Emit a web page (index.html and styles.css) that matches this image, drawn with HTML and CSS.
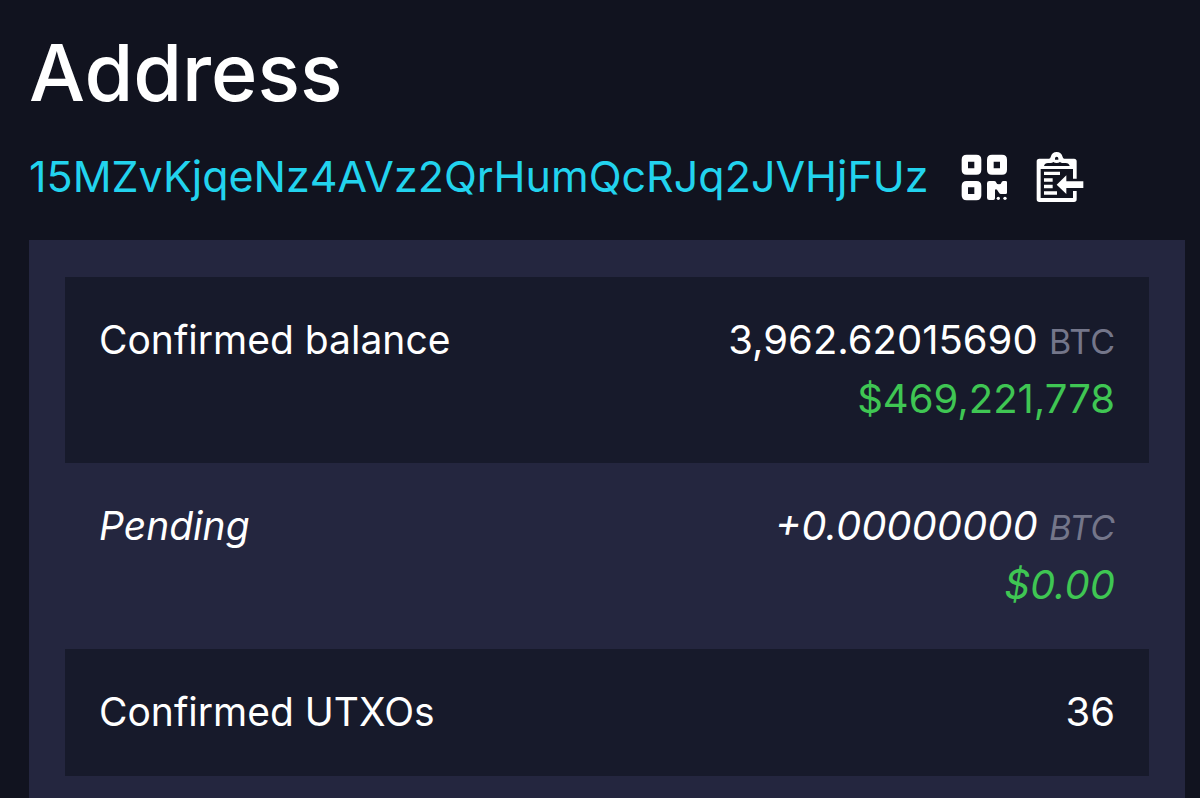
FILE: index.html
```html
<!DOCTYPE html>
<html lang="en">
  <head>
    <meta charset="UTF-8" />
    <meta name="viewport" content="width=device-width, initial-scale=1.0" />
    <title>Address</title>
    <link rel="stylesheet" href="styles.css">
  </head>
  <body>
    <main class="page">
      <h1 class="title">Address</h1>

      <div class="address-row">
        <a class="address-link" href="#15MZvKjqeNz4AVz2QrHumQcRJq2JVHjFUz">15MZvKjqeNz4AVz2QrHumQcRJq2JVHjFUz</a>
        <div class="actions">
          <button class="icon-button" type="button" aria-label="Show QR code">
            <svg viewBox="0 0 144 150" aria-hidden="true">
              <path fill-rule="evenodd" d="M17 8h29q15 0 15 15v30q0 15-15 15h-29q-15 0-15-15v-30q0-15 15-15zM21 29v20h19v-20z" />
              <path fill-rule="evenodd" d="M93 8h30q15 0 15 15v30q0 15-15 15h-30q-15 0-15-15v-30q0-15 15-15zM98 29v20h19v-20z" />
              <path fill-rule="evenodd" d="M17 87h29q15 0 15 15v28q0 15-15 15h-29q-15 0-15-15v-28q0-15 15-15zM21 106v20h19v-20z" />
              <path d="M85 87h15q5 0 6 5 1 5 8 5 6 0 7-5 1-5 6-5h7q4 0 4 4v31q0 4-4 4h-14q-4 0-6-4l-6-9q-3-3-6 0v26q0 5-5 5h-12q-7 0-7-7v-43q0-7 7-7z" />
              <circle cx="112" cy="139" r="5" />
              <circle cx="132" cy="139" r="5" />
            </svg>
          </button>
          <button class="icon-button" type="button" aria-label="Copy address">
            <svg viewBox="0 0 144 150" aria-hidden="true">
              <path fill-rule="evenodd" d="M10 20h29q4 0 5-5 4-15 18-15t18 15q1 5 5 5h29q8 0 8 8v52h-11v-29h-97v87h97v-21h11v25q0 8-8 8h-104q-8 0-8-8v-114q0-8 8-8zM62 14q-5 0-5 5v4h10v-4q0-5-5-5zM24 42h77q-2-9-12-9h-9q-5 0-8-3-4 3-10 3t-10-3q-3 3-8 3h-8q-10 0-12 9z" />
              <path d="M24 59h48v10h-48zM24 79h26v10h-26zM24 98h26v11h-26zM24 118h39v10h-39z" />
              <path d="M62 98l29-28v18h51v20h-51v18z" />
            </svg>
          </button>
        </div>
      </div>

      <section class="panel">
        <table class="details">
          <tbody>
            <tr>
              <th scope="row">Confirmed balance</th>
              <td>
                <div>3,962.62015690 <span class="unit">BTC</span></div>
                <div class="fiat">$469,221,778</div>
              </td>
            </tr>
            <tr class="pending">
              <th scope="row">Pending</th>
              <td>
                <div>+0.00000000 <span class="unit">BTC</span></div>
                <div class="fiat">$0.00</div>
              </td>
            </tr>
            <tr>
              <th scope="row">Confirmed UTXOs</th>
              <td>36</td>
            </tr>
          </tbody>
        </table>
      </section>
    </main>
  </body>
</html>
```

FILE: styles.css
```css
*,
*::before,
*::after {
  box-sizing: border-box;
}

:root {
  --bg: #11131f;
  --panel: #24263f;
  --row: #171a2b;
  --text: #ffffff;
  --muted: #74768a;
  --link: #22d3ee;
  --green: #3fc653;
}

body {
  margin: 0;
  background: var(--bg);
  color: var(--text);
  font-family: Inter, "Liberation Sans", sans-serif;
  font-size: 40px;
  line-height: 59px;
}

.page {
  display: flex;
  flex-direction: column;
  min-height: 100vh;
  padding: 24px 15px 0 29px;
}

.title {
  margin: 0 0 27px;
  font-size: 79px;
  font-weight: 500;
  line-height: 96px;
}

.address-row {
  display: flex;
  align-items: center;
  gap: 32px;
  margin-bottom: 34px;
}

.address-link {
  color: var(--link);
  font-size: 43px;
  text-decoration: none;
}

.address-link:hover {
  text-decoration: underline;
}

.actions {
  display: flex;
  gap: 27px;
}

.icon-button {
  display: flex;
  padding: 0;
  border: none;
  background: none;
  color: inherit;
  cursor: pointer;
}

.icon-button svg {
  width: 48px;
  height: 50px;
  fill: currentColor;
}

.panel {
  flex: 1;
  padding: 37px 36px 0;
  background: var(--panel);
}

.details {
  width: 100%;
  border-collapse: collapse;
}

.details tr:nth-child(odd) {
  background: var(--row);
}

.details th,
.details td {
  padding: 33px 34px 35px;
  font-weight: 400;
  text-align: left;
  vertical-align: top;
}

.details th {
  font-size: 39px;
}

.details td {
  text-align: right;
}

.pending {
  font-style: italic;
}

.unit {
  color: var(--muted);
  font-size: 34px;
  line-height: 1;
}

.fiat {
  color: var(--green);
}
```
